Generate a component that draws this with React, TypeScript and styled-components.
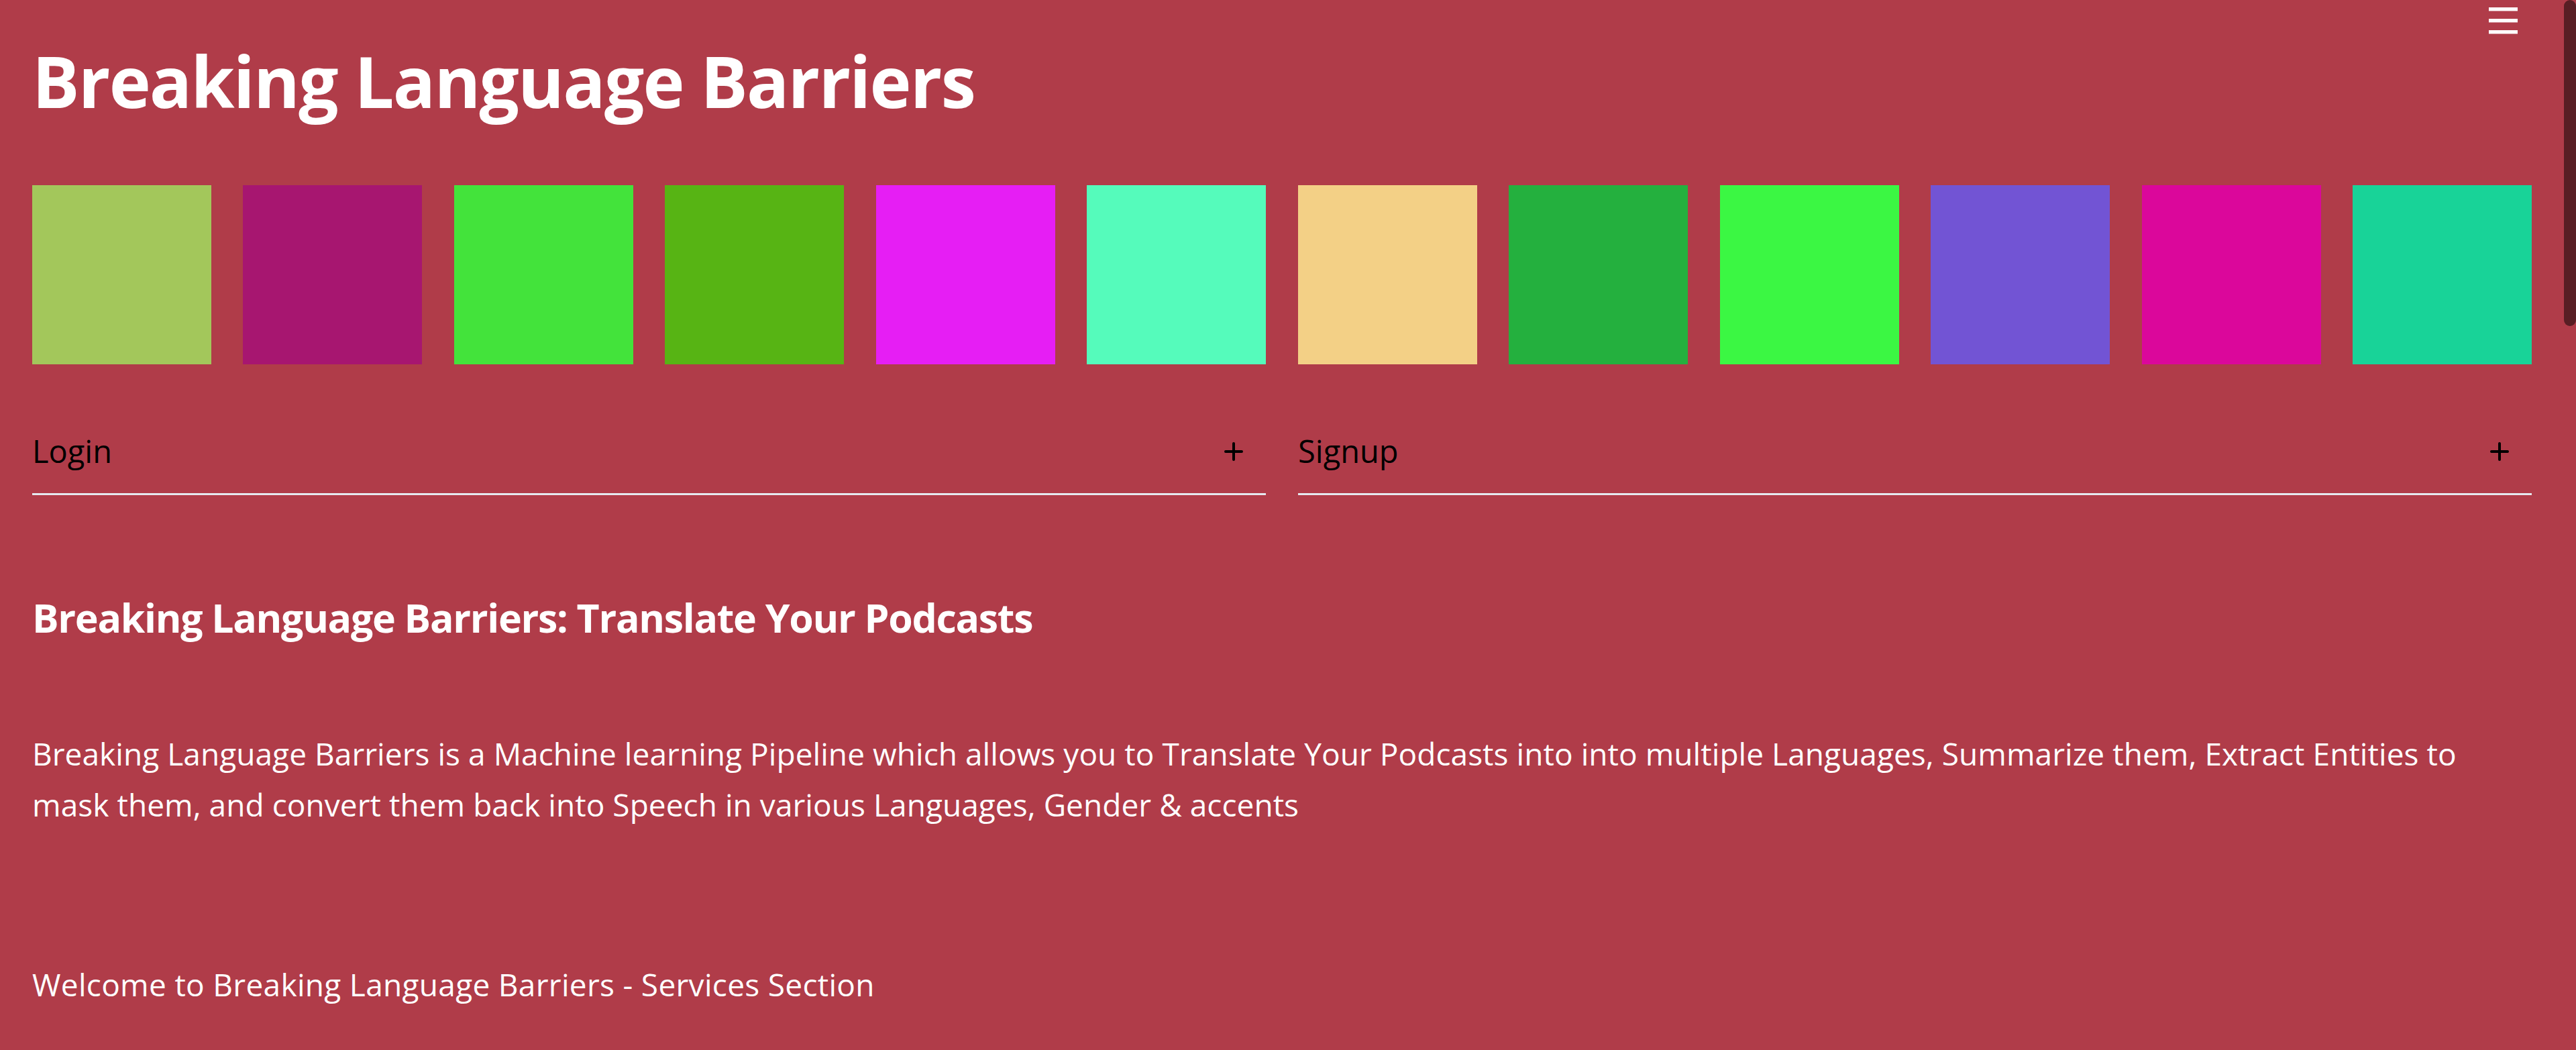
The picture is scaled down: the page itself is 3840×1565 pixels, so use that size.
import React from "react";
import styled, { createGlobalStyle } from "styled-components";

const GlobalStyle = createGlobalStyle`
  html, body {
    margin: 0;
    padding: 0;
    background: #b03c49;
    overflow: hidden;
  }
  * { box-sizing: border-box; }
`;

const Page = styled.div`
  position: relative;
  height: 100vh;
  overflow: hidden;
  padding-right: 18px;
  background: #b03c49;
  color: #ffffff;
  font-family: "Open Sans", "Noto Sans", sans-serif;
`;

const ScrollThumb = styled.div`
  position: absolute;
  top: 0;
  right: 0;
  width: 18px;
  height: 486px;
  border-radius: 9px;
  background: #581e24;
`;

const Main = styled.main`
  padding: 58px 48px 0;
  display: flex;
  flex-direction: column;
`;

const MenuButton = styled.button`
  position: absolute;
  top: 11px;
  right: 87px;
  width: 43px;
  height: 39px;
  padding: 0;
  border: none;
  background: transparent;
  display: flex;
  flex-direction: column;
  justify-content: space-between;
  cursor: pointer;
`;

const MenuBar = styled.span`
  display: block;
  width: 43px;
  height: 5px;
  background: #ffffff;
  box-shadow: 0 1px 0 rgba(255, 255, 255, 0.4);
`;

const Title = styled.h1`
  margin: 0;
  font-size: 105px;
  line-height: 126px;
  font-weight: 700;
  letter-spacing: -1.8px;
`;

const Swatches = styled.div`
  margin-top: 92px;
  display: flex;
  justify-content: space-between;
`;

const Swatch = styled.div<{ $color: string }>`
  width: 267px;
  height: 267px;
  flex: none;
  background: ${(p) => p.$color};
`;

const Columns = styled.div`
  margin-top: 68px;
  display: grid;
  grid-template-columns: 1fr 1fr;
  column-gap: 48px;
`;

const Expander = styled.div`
  border-bottom: 3px solid #e6e9ef;
`;

const Summary = styled.div`
  display: flex;
  align-items: center;
  justify-content: space-between;
  padding: 24px 0 25px;
  color: #000000;
  font-size: 47px;
  line-height: 75px;
  cursor: pointer;
`;

const PlusIcon = styled.svg`
  width: 28px;
  height: 28px;
  margin-right: 34px;
  flex: none;
`;

const Heading = styled.h2`
  margin: 147px 0 0;
  font-size: 59px;
  line-height: 71px;
  font-weight: 700;
  letter-spacing: -1.3px;
`;

const Paragraph = styled.p`
  margin: 129px 0 0;
  max-width: 3700px;
  font-size: 46px;
  line-height: 76px;
  letter-spacing: 0.05px;
`;

const Note = styled.p`
  margin: 192px 0 0;
  font-size: 46px;
  line-height: 76px;
  letter-spacing: 0.3px;
`;

const colors = [
  "#a3c75b",
  "#a71670",
  "#43e33b",
  "#57b414",
  "#e61ef4",
  "#55fbbb",
  "#f3d086",
  "#24b03e",
  "#3bf743",
  "#7254d4",
  "#db079b",
  "#18d398",
];

const Plus = () => (
  <PlusIcon viewBox="0 0 28 28" fill="none">
    <path d="M14 2v24M2 14h24" stroke="#000" strokeWidth="4" strokeLinecap="round" />
  </PlusIcon>
);

const ExpanderItem = ({ label }: { label: string }) => (
  <Expander>
    <Summary>
      <span>{label}</span>
      <Plus />
    </Summary>
  </Expander>
);

export default function App() {
  return (
    <>
      <GlobalStyle />
      <Page>
        <ScrollThumb />
        <MenuButton aria-label="Menu">
          <MenuBar />
          <MenuBar />
          <MenuBar />
        </MenuButton>
        <Main>
          <Title>Breaking Language Barriers</Title>
          <Swatches>
            {colors.map((c) => (
              <Swatch key={c} $color={c} />
            ))}
          </Swatches>
          <Columns>
            <ExpanderItem label="Login" />
            <ExpanderItem label="Signup" />
          </Columns>
          <Heading>Breaking Language Barriers: Translate Your Podcasts</Heading>
          <Paragraph>
            Breaking Language Barriers is a Machine learning Pipeline which allows you to Translate Your
            Podcasts into into multiple Languages, Summarize them, Extract Entities to mask them, and
            convert them back into Speech in various Languages, Gender &amp; accents
          </Paragraph>
          <Note>Welcome to Breaking Language Barriers - Services Section</Note>
        </Main>
      </Page>
    </>
  );
}
